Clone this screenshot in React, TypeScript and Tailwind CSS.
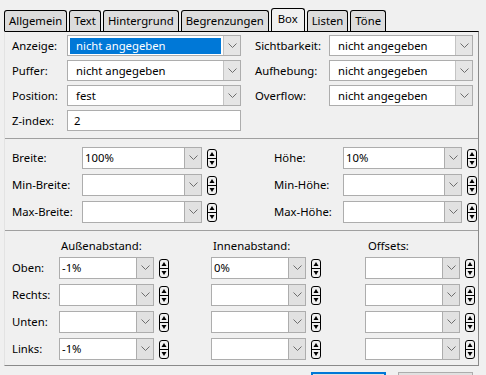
import React from 'react';

const tabs = ['Allgemein', 'Text', 'Hintergrund', 'Begrenzungen', 'Box', 'Listen', 'Töne'];

const Chevron = () => (
    <svg width="9" height="6" viewBox="0 0 9 6" className="block">
        <path d="M0.5 0.5 L4.5 4.5 L8.5 0.5" fill="none" stroke="#6d6d6d" strokeWidth="1" />
    </svg>
);

const Spinner = () => (
    <svg width="10" height="19" viewBox="0 0 10 19" className="block shrink-0">
        <path d="M0.5 9 V3 Q0.5 0.5 3 0.5 H7 Q9.5 0.5 9.5 3 V16 Q9.5 18.5 7 18.5 H3 Q0.5 18.5 0.5 16 Z" fill="#f0f0f0" stroke="#000" strokeWidth="1" />
        <path d="M0.5 9.5 H9.5" stroke="#000" strokeWidth="1" />
        <path d="M5 3 L7.5 7 H2.5 Z" fill="#000" />
        <path d="M2.5 12 H7.5 L5 16 Z" fill="#000" />
    </svg>
);

const Select = ({ value, width, active }: { value: string; width: string; active?: boolean }) => (
    <div className={`flex h-[21px] ${width} border border-[#adadad] bg-white`}>
        <div className="flex-1 flex items-center px-[2px]">
            <div className={`w-full h-[16px] flex items-center pl-[6px] ${active ? 'bg-[#0078d7] text-white' : ''}`}>{value}</div>
        </div>
        <div className="w-[17px] bg-[#e5e5e5] border-l border-[#c4c4c4] flex items-center justify-center">
            <Chevron />
        </div>
    </div>
);

const Combo = ({ value = '', width }: { value?: string; width: string }) => (
    <div className="flex items-center gap-[5px]">
        <div className={`flex h-[22px] ${width} border border-[#adadad] bg-white`}>
            <div className="flex-1 flex items-center pl-[2px]">{value}</div>
            <div className="w-[17px] bg-[#e1e1e1] border-l border-[#adadad] flex items-center justify-center">
                <Chevron />
            </div>
        </div>
        <Spinner />
    </div>
);

const App: React.FC = () => {
    return (
        <div className="w-[486px] h-[375px] overflow-hidden bg-[#f0f0f0] text-black text-[11.3px] leading-none" style={{ fontFamily: '"Noto Sans", sans-serif' }}>
            {/* tab strip */}
            <div className="flex items-end gap-[2px] h-[31px] pl-[4px]">
                {tabs.map((t) => (
                    <div
                        key={t}
                        className={`flex items-center justify-center px-[4px] border border-b-0 border-black rounded-t-[3px] ${t === 'Box' ? 'h-[23px] bg-[#f0f0f0] px-[6px] pb-[3px]' : 'h-[21px] bg-[#dcdcdc]'}`}
                    >
                        {t}
                    </div>
                ))}
            </div>

            {/* panel */}
            <div className="ml-[4px] w-[475px] h-[335px] border-t border-t-black border-x border-b border-[#8a8a8a] border-l-[#e3e3e3]">
                {/* section 1 */}
                <div className="flex pt-[3px] pl-[7px] h-[107px] border-b border-[#a0a0a0]">
                    <div className="flex flex-col gap-[4px]">
                        {[
                            ['Anzeige:', 'nicht angegeben', true],
                            ['Puffer:', 'nicht angegeben', false],
                            ['Position:', 'fest', false],
                        ].map(([l, v, a]) => (
                            <div key={l as string} className="flex items-center">
                                <span className="w-[55px]">{l as string}</span>
                                <Select value={v as string} width="w-[174px]" active={a as boolean} />
                            </div>
                        ))}
                        <div className="flex items-center">
                            <span className="w-[55px]">Z-index:</span>
                            <div className="h-[21px] w-[174px] border border-[#adadad] bg-white flex items-center pl-[6px]">2</div>
                        </div>
                    </div>
                    <div className="flex flex-col gap-[4px] ml-[14px]">
                        {['Sichtbarkeit:', 'Aufhebung:', 'Overflow:'].map((l) => (
                            <div key={l} className="flex items-center">
                                <span className="w-[74px]">{l}</span>
                                <Select value="nicht angegeben" width="w-[144px]" />
                            </div>
                        ))}
                    </div>
                </div>

                {/* section 2 */}
                <div className="flex pt-[8px] pl-[7px] h-[92px] border-b border-[#a0a0a0]">
                    <div className="flex flex-col gap-[5px]">
                        {[
                            ['Breite:', '100%'],
                            ['Min-Breite:', ''],
                            ['Max-Breite:', ''],
                        ].map(([l, v]) => (
                            <div key={l} className="flex items-center">
                                <span className="w-[70px]">{l}</span>
                                <Combo value={v} width="w-[120px]" />
                            </div>
                        ))}
                    </div>
                    <div className="flex flex-col gap-[5px] ml-[57px]">
                        {[
                            ['Höhe:', '10%'],
                            ['Min-Höhe:', ''],
                            ['Max-Höhe:', ''],
                        ].map(([l, v]) => (
                            <div key={l} className="flex items-center">
                                <span className="w-[69px]">{l}</span>
                                <Combo value={v} width="w-[119px]" />
                            </div>
                        ))}
                    </div>
                </div>

                {/* section 3 */}
                <div className="pl-[7px] pt-[7px]">
                    <div className="flex h-[16px] items-center">
                        <span className="ml-[49px] w-[152px]">Außenabstand:</span>
                        <span className="w-[155px]">Innenabstand:</span>
                        <span>Offsets:</span>
                    </div>
                    <div className="flex flex-col gap-[5px] mt-[3px]">
                        {[
                            ['Oben:', '-1%', '0%'],
                            ['Rechts:', '', ''],
                            ['Unten:', '', ''],
                            ['Links:', '-1%', ''],
                        ].map(([l, a, b]) => (
                            <div key={l} className="flex items-center">
                                <span className="w-[47px]">{l}</span>
                                <Combo value={a} width="w-[95px]" />
                                <div className="ml-[42px]">
                                    <Combo value={b} width="w-[95px]" />
                                </div>
                                <div className="ml-[44px]">
                                    <Combo width="w-[95px]" />
                                </div>
                            </div>
                        ))}
                    </div>
                </div>
            </div>

            {/* dialog buttons, mostly cut off */}
            <div className="flex justify-end gap-[12px] pr-[13px] mt-[6px]">
                <div className="w-[75px] h-[23px] border-2 border-[#0078d7] bg-[#e1e1e1]" />
                <div className="w-[75px] h-[23px] border border-[#adadad] bg-[#e1e1e1]" />
            </div>
        </div>
    );
};

export default App;
